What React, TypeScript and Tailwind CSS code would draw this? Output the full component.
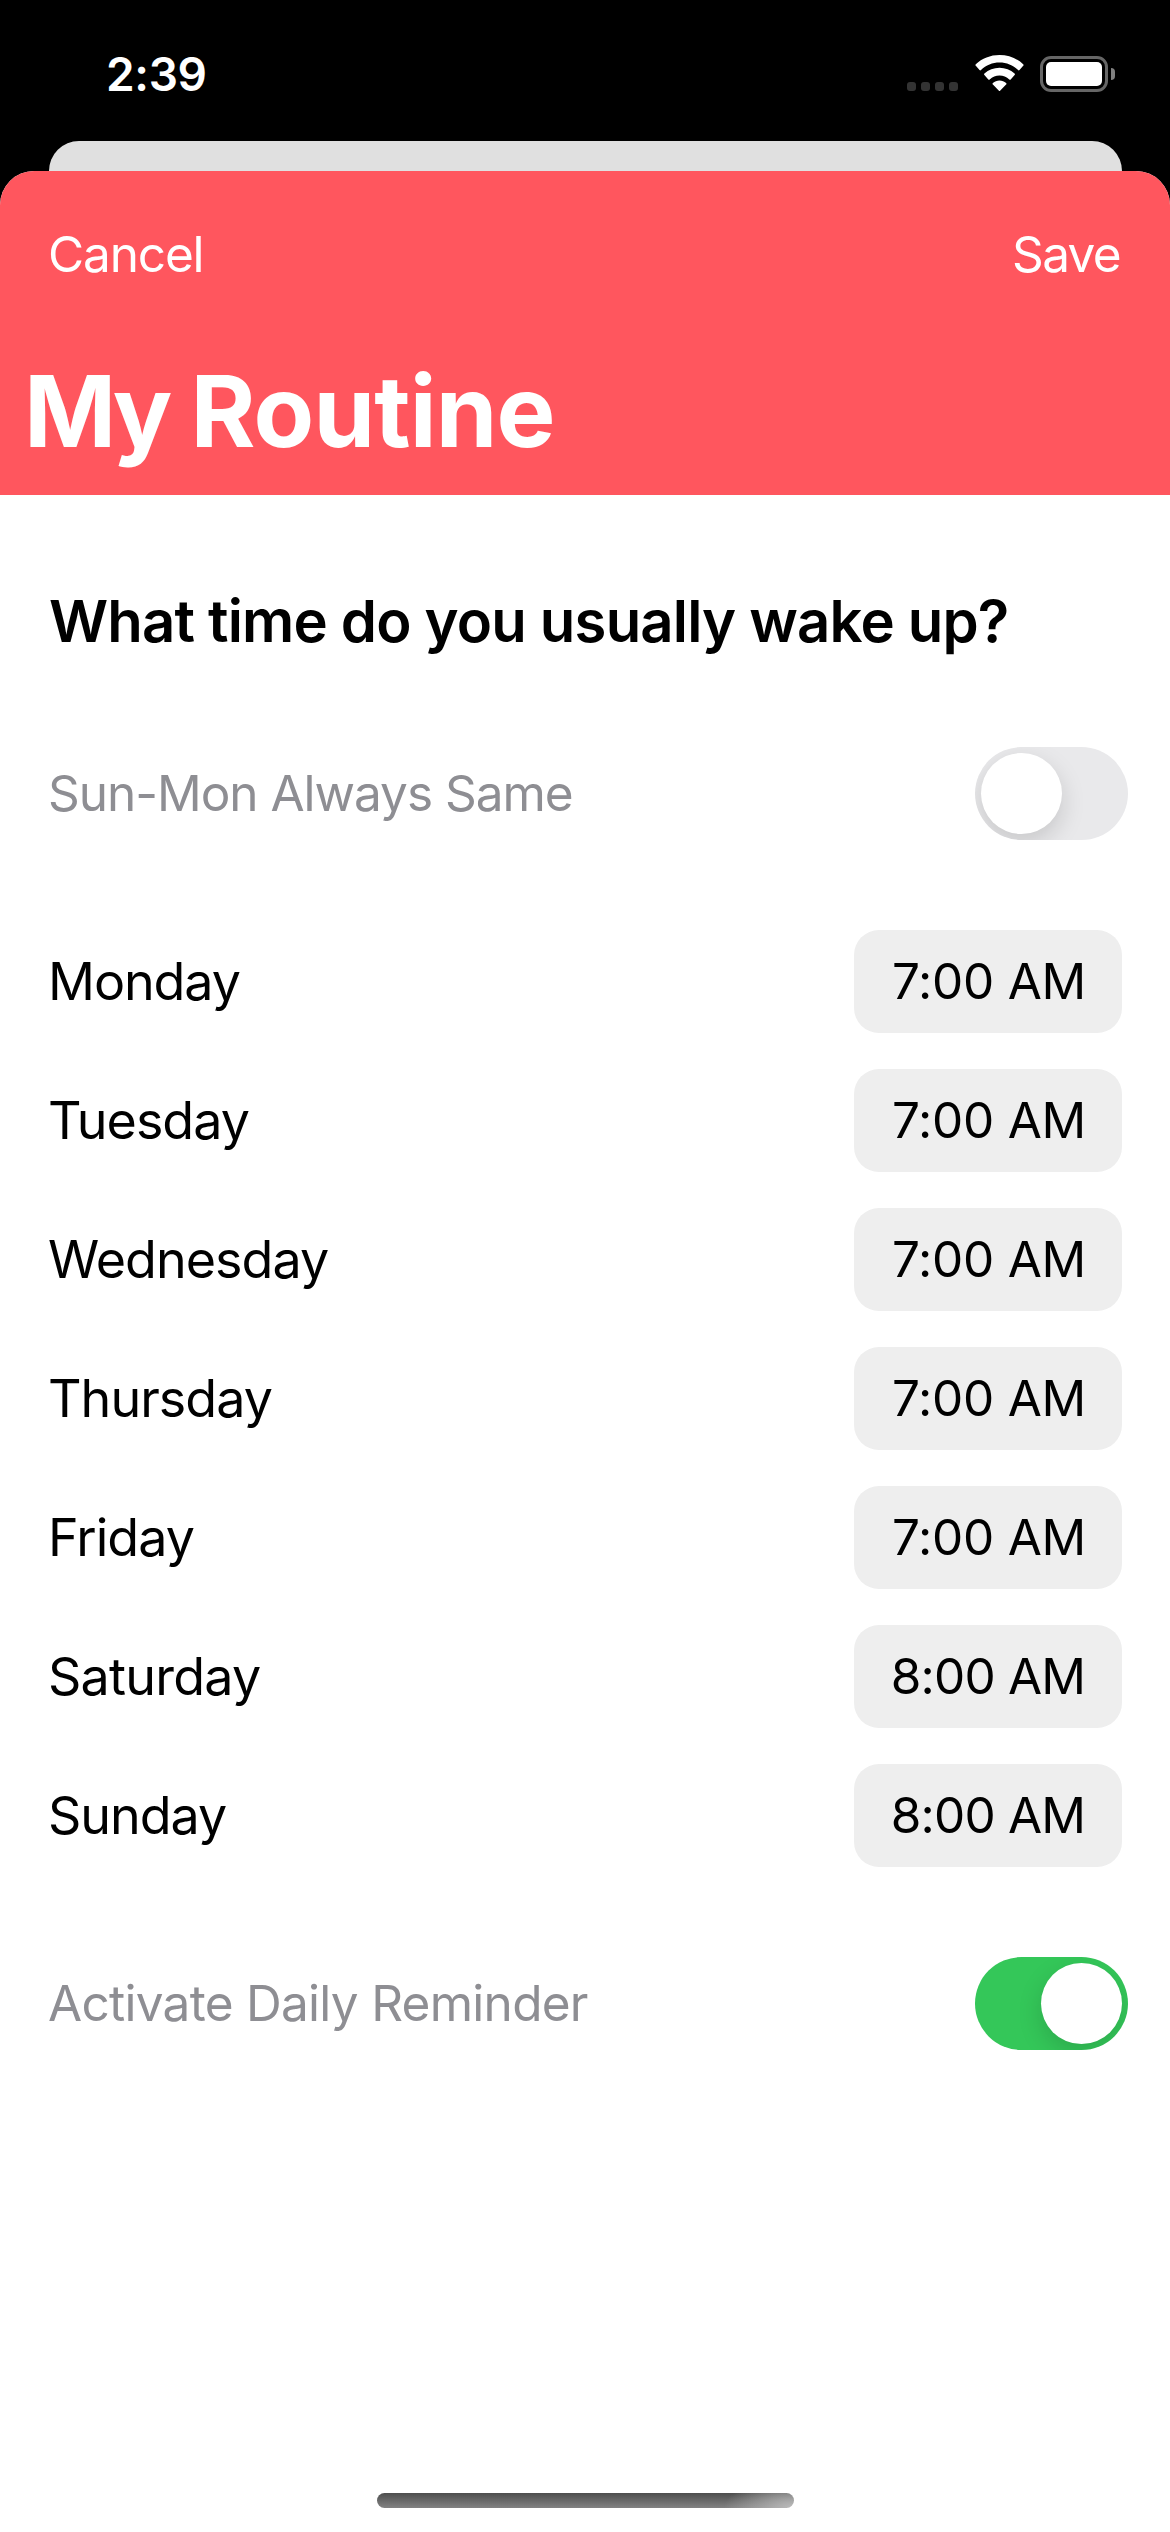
import clsx from "clsx";

type Day = { name: string; time: string; nameTracking: string };

const days: Day[] = [
  { name: "Monday", time: "7:00 AM", nameTracking: "tracking-[-1.09px]" },
  { name: "Tuesday", time: "7:00 AM", nameTracking: "tracking-[-0.97px]" },
  { name: "Wednesday", time: "7:00 AM", nameTracking: "tracking-[-0.95px]" },
  { name: "Thursday", time: "7:00 AM", nameTracking: "tracking-[-0.95px]" },
  { name: "Friday", time: "7:00 AM", nameTracking: "tracking-[-0.95px]" },
  { name: "Saturday", time: "8:00 AM", nameTracking: "tracking-[-0.76px]" },
  { name: "Sunday", time: "8:00 AM", nameTracking: "tracking-[-1.02px]" },
];

function WifiIcon() {
  return (
    <svg className="h-[36px] w-[49px]" viewBox="0 0 49 36" fill="#fff">
      <path d="M24.5 0C33.6 0 42 3.4 48.2 9.3a1 1 0 0 1 0 1.5L44.5 15a1 1 0 0 1-1.5 0C38 10.2 31.5 7.6 24.5 7.6S11 10.2 6 15a1 1 0 0 1-1.5 0L.8 10.8a1 1 0 0 1 0-1.5C7 3.4 15.4 0 24.5 0Z" />
      <path d="M24.5 12.8c5.7 0 11 2.1 15.1 5.8a1 1 0 0 1 0 1.5l-3.9 4.3a1 1 0 0 1-1.4 0c-2.7-2.4-6.1-3.8-9.8-3.8s-7.1 1.4-9.8 3.8a1 1 0 0 1-1.4 0l-3.9-4.3a1 1 0 0 1 0-1.5c4.1-3.7 9.4-5.8 15.1-5.8Z" />
      <path d="M24.5 25.4c2.5 0 4.8.9 6.6 2.5a1 1 0 0 1 0 1.5l-5.8 6.2a1 1 0 0 1-1.6 0l-5.8-6.2a1 1 0 0 1 0-1.5c1.8-1.6 4.1-2.5 6.600-2.500Z" />
    </svg>
  );
}

function BatteryIcon() {
  return (
    <div className="flex items-center gap-[3px]">
      <div className="h-[36px] w-[68px] rounded-[11px] border-[3px] border-[#666666] p-[3px]">
        <div className="h-full w-full rounded-[5px] bg-white" />
      </div>
      <div className="h-[12px] w-[4px] rounded-r-full bg-[#808080]" />
    </div>
  );
}

function StatusBar() {
  return (
    <div className="flex h-[141px] items-center justify-between pt-[7px] pr-[55px] pl-[106px]">
      <span className="text-[46px] leading-none font-semibold tracking-[-0.33px] text-white">2:39</span>
      <div className="flex items-end pb-[1px]">
        <div className="mr-[17px] flex gap-[5px] pb-[1px]">
          {[0, 1, 2, 3].map((dot) => (
            <div key={dot} className="size-[9px] rounded-[3px] bg-[#333333]" />
          ))}
        </div>
        <div className="mr-[16px] pb-[1px]">
          <WifiIcon />
        </div>
        <BatteryIcon />
      </div>
    </div>
  );
}

function Toggle({ on }: { on: boolean }) {
  return (
    <div
      className={clsx(
        "flex h-[93px] w-[153px] items-center overflow-hidden rounded-full p-[6px]",
        on ? "justify-end bg-[#34c759]" : "justify-start bg-[#e9e9eb]",
      )}
    >
      <div className="size-[81px] rounded-full bg-white shadow-[0_9px_24px_rgba(0,0,0,0.15)]" />
    </div>
  );
}

function SettingRow({ label, tracking, on }: { label: string; tracking: string; on: boolean }) {
  return (
    <div className="flex items-center justify-between pr-[42px] pl-12">
      <span className={clsx("text-[49.5px] leading-none text-[#8e8e93]", tracking)}>{label}</span>
      <Toggle on={on} />
    </div>
  );
}

function DayRow({ day }: { day: Day }) {
  return (
    <div className="flex items-center justify-between pr-12 pl-12">
      <span className={clsx("text-[52px] leading-none text-black", day.nameTracking)}>{day.name}</span>
      <div className="flex h-[103px] w-[268px] items-center justify-center rounded-[25px] bg-[#eeeeee]">
        <span
          className={clsx(
            "text-[49.5px] leading-none text-black",
            day.time.startsWith("8") ? "tracking-[-0.79px]" : "pl-[2px] tracking-[-0.25px]",
          )}
        >
          {day.time}
        </span>
      </div>
    </div>
  );
}

export default function App() {
  return (
    <div className="flex h-[2532px] w-[1170px] flex-col overflow-hidden bg-black font-['Inter',sans-serif] whitespace-nowrap">
      <StatusBar />
      <div className="mx-[48.5px] h-[30px] shrink-0 rounded-t-[30px] bg-[#e0e0e0]" />
      <main className="flex grow flex-col overflow-hidden rounded-t-[34px] bg-white">
        <header className="flex h-[324px] shrink-0 flex-col bg-[#ff565e] text-white">
          <div className="flex h-[168px] items-center justify-between pr-[50px] pl-12 text-[49.5px] leading-none">
            <span className="tracking-[-1.15px]">Cancel</span>
            <span className="tracking-[-1.66px]">Save</span>
          </div>
          <h1 className="h-[144px] pl-6 text-[99px] leading-[144px] font-bold tracking-[-0.8px]">
            <span className="tracking-[-4.5px]">My</span> Routine
          </h1>
        </header>
        <h2 className="mt-[86px] pl-[49px] text-[58px] leading-[80px] font-semibold tracking-[-0.8px] text-black">
          What time do you usually wake up?
        </h2>
        <section className="mt-[86px] flex flex-col gap-[90px]">
          <SettingRow label="Sun-Mon Always Same" tracking="tracking-[-1.02px]" on={false} />
          <div className="flex flex-col gap-9">
            {days.map((day) => (
              <DayRow key={day.name} day={day} />
            ))}
          </div>
          <SettingRow label="Activate Daily Reminder" tracking="tracking-[-0.72px]" on />
        </section>
        <div className="mt-auto mb-6 h-[15px] w-[417px] self-center rounded-full bg-[radial-gradient(ellipse_70px_30px_at_100%_100%,#bcbcbc_0%,transparent_100%),linear-gradient(to_bottom,#4e4e4e,#828282)]" />
      </main>
    </div>
  );
}
